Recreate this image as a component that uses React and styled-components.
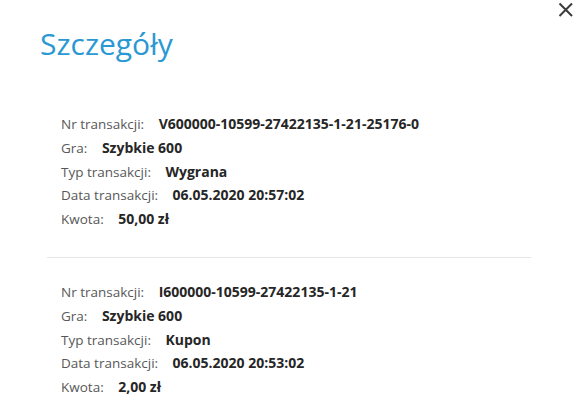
import React from "react";
import styled, { createGlobalStyle } from "styled-components";

const Global = createGlobalStyle`
  html, body { margin: 0; padding: 0; background: #fff; }
  body { font-family: "Open Sans", "Liberation Sans", sans-serif; }
`;

const Modal = styled.div`
  position: relative;
  width: 587px;
  height: 413px;
  box-sizing: border-box;
  padding-top: 29px;
  background: #fff;
  overflow: hidden;
`;

const Title = styled.h1`
  margin: 0 0 0 40px;
  font-size: 30px;
  line-height: 30px;
  font-weight: 400;
  color: #2a98d2;
`;

const CloseButton = styled.button`
  position: absolute;
  left: 556px;
  top: 0;
  width: 20px;
  height: 20px;
  padding: 0;
  border: 0;
  background: transparent;
  cursor: pointer;
`;

const List = styled.div`
  margin-top: 53px;
  display: flex;
  flex-direction: column;
`;

const Block = styled.dl`
  margin: 0;
  padding-left: 61px;
  display: flex;
  flex-direction: column;
`;

const Row = styled.div`
  display: flex;
  align-items: baseline;
  gap: 14.5px;
  height: 23.8px;
  line-height: 23.8px;
  white-space: nowrap;
`;

const Label = styled.dt`
  font-size: 13.5px;
  color: #585858;
`;

const Value = styled.dd`
  margin: 0;
  font-size: 14px;
  font-weight: 700;
  color: #262626;
`;

const Divider = styled.hr`
  margin: 26px 0 22px 47px;
  width: 484px;
  height: 1px;
  border: 0;
  background: #e6e6e6;
`;

const transactions = [
  {
    nr: "V600000-10599-27422135-1-21-25176-0",
    gra: "Szybkie 600",
    typ: "Wygrana",
    data: "06.05.2020 20:57:02",
    kwota: "50,00 zł",
  },
  {
    nr: "I600000-10599-27422135-1-21",
    gra: "Szybkie 600",
    typ: "Kupon",
    data: "06.05.2020 20:53:02",
    kwota: "2,00 zł",
  },
];

function Transaction({ t }) {
  const rows = [
    ["Nr transakcji:", t.nr],
    ["Gra:", t.gra],
    ["Typ transakcji:", t.typ],
    ["Data transakcji:", t.data],
    ["Kwota:", t.kwota],
  ];
  return (
    <Block>
      {rows.map(([l, v]) => (
        <Row key={l}>
          <Label>{l}</Label>
          <Value>{v}</Value>
        </Row>
      ))}
    </Block>
  );
}

export default function App() {
  return (
    <>
      <Global />
      <Modal>
        <CloseButton aria-label="Zamknij">
          <svg width="20" height="20" viewBox="0 0 20 20">
            <path d="M3.5 3.5 L16 16 M16 3.5 L3.5 16" stroke="#3a3a3a" strokeWidth="2" fill="none" />
          </svg>
        </CloseButton>
        <Title>Szczegóły</Title>
        <List>
          {transactions.map((t, i) => (
            <React.Fragment key={i}>
              {i > 0 && <Divider />}
              <Transaction t={t} />
            </React.Fragment>
          ))}
        </List>
      </Modal>
    </>
  );
}
